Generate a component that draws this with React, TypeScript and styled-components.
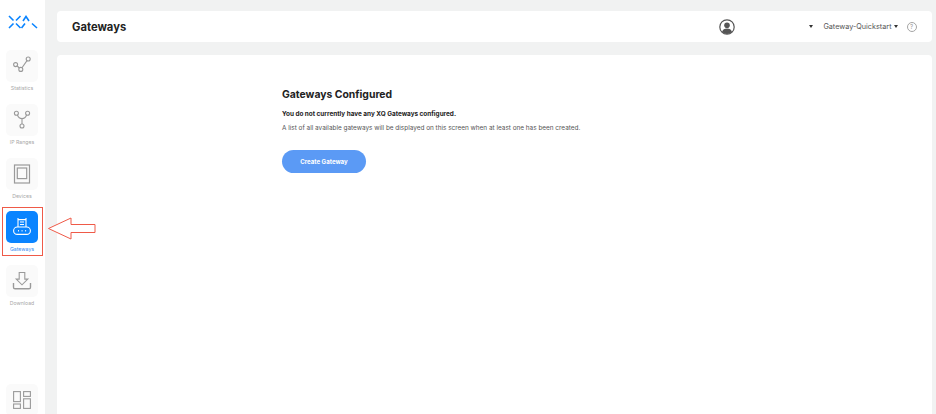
import React from "react";
import styled, { createGlobalStyle } from "styled-components";

const Global = createGlobalStyle`
  html, body { margin: 0; padding: 0; height: 100%; background: #f1f2f2; }
  body { font-family: Inter, "Liberation Sans", sans-serif; overflow: hidden; }
  #root { height: 414px; }
`;

const Page = styled.div`
  position: relative;
  width: 936px;
  height: 414px;
  display: flex;
  overflow: hidden;
  background: #f1f2f2;
`;

const Sidebar = styled.nav`
  width: 45px;
  height: 414px;
  background: #fff;
  flex: none;
  display: flex;
  flex-direction: column;
  align-items: center;
  padding-top: 15px;
  box-sizing: border-box;
`;

const Logo = styled.svg`
  width: 30px;
  height: 15px;
  margin-bottom: 20px;
  flex: none;
`;

const NavList = styled.div`
  display: flex;
  flex-direction: column;
  flex: 1;
  margin-bottom: -24px;
`;

const NavItem = styled.div<{ $bottom?: boolean }>`
  width: 45px;
  height: 53.8px;
  flex: none;
  display: flex;
  flex-direction: column;
  align-items: center;
  margin-top: ${(p) => (p.$bottom ? "auto" : "0")};
`;

const Tile = styled.div<{ $active?: boolean }>`
  width: 32px;
  height: 32px;
  border-radius: 5px;
  background: ${(p) => (p.$active ? "#0a84ff" : "#fafafa")};
  color: ${(p) => (p.$active ? "#fff" : "#9a9a9a")};
  display: flex;
  align-items: center;
  justify-content: center;
  margin-left: -1px;
`;

const NavLabel = styled.span<{ $active?: boolean }>`
  margin-top: 3px;
  margin-left: -1px;
  font-size: 5.2px;
  line-height: 7px;
  color: ${(p) => (p.$active ? "#3b8df0" : "#a8a8a8")};
`;

const Main = styled.main`
  flex: 1;
  display: flex;
  flex-direction: column;
  gap: 13px;
  padding: 11px 4px 0 12px;
  min-width: 0;
`;

const TopBar = styled.header`
  height: 31px;
  flex: none;
  background: #fff;
  border-radius: 4px;
  display: flex;
  align-items: center;
  padding: 0 15.5px 0 15px;
`;

const PageTitle = styled.h1`
  margin: 0;
  font-size: 11.2px;
  font-weight: 700;
  color: #222;
  flex: 1;
`;

const Avatar = styled.svg`
  width: 16px;
  height: 16px;
  color: #555;
  margin-right: 74px;
`;

const Caret = styled.span`
  width: 0;
  height: 0;
  border-left: 2.5px solid transparent;
  border-right: 2.5px solid transparent;
  border-top: 3px solid #333;
`;

const Workspace = styled.span`
  font-size: 7.25px;
  color: #555;
  margin: 0 2px 0 10px;
`;

const Help = styled.span`
  width: 8px;
  height: 8px;
  border-radius: 50%;
  border: 1px solid #a5a5a5;
  margin-left: 9px;
  color: #999;
  font-size: 6px;
  line-height: 8px;
  text-align: center;
`;

const Panel = styled.section`
  flex: 1;
  background: #fff;
  border-radius: 4px 4px 0 0;
  padding: 33px 0 0 225px;
  display: flex;
  flex-direction: column;
  align-items: flex-start;
`;

const Heading = styled.h2`
  margin: 0;
  font-size: 10.4px;
  line-height: 14px;
  font-weight: 700;
  color: #222;
`;

const Strong = styled.p`
  margin: 8px 0 0;
  font-size: 6.4px;
  line-height: 9px;
  font-weight: 700;
  color: #222;
`;

const Body = styled.p`
  margin: 5px 0 0;
  font-size: 6.42px;
  line-height: 9px;
  color: #555;
`;

const Button = styled.button`
  margin-top: 17px;
  width: 84px;
  height: 23px;
  border: 0;
  border-radius: 12px;
  background: #5b9af5;
  color: #fff;
  font-family: inherit;
  font-size: 6.1px;
  font-weight: 700;
  padding: 0;
`;

const Highlight = styled.div`
  position: absolute;
  left: 2px;
  top: 207px;
  width: 39px;
  height: 47px;
  border: 1.5px solid #ef5a48;
`;

const Arrow = styled.svg`
  position: absolute;
  left: 47px;
  top: 217px;
  width: 50px;
  height: 23px;
`;

const Icon = styled.svg`
  width: 20px;
  height: 20px;
  fill: none;
  stroke: currentColor;
  stroke-width: 1.1;
`;

const items = [
  {
    label: "Statistics",
    icon: (
      <>
        <circle cx="3.6" cy="8.6" r="2" />
        <circle cx="8.8" cy="13.4" r="2" />
        <circle cx="16.2" cy="3" r="2" />
        <path d="M5.2 10 7.3 12M10 11.8 15 4.6" />
      </>
    ),
  },
  {
    label: "IP Ranges",
    icon: (
      <>
        <circle cx="4.4" cy="3.2" r="2" />
        <circle cx="15.6" cy="3.2" r="2" />
        <circle cx="10" cy="16" r="2" />
        <path d="M5.4 5C6.4 7.6 8 8.6 10 8.6s3.6-1 4.6-3.6M10 8.6V14" />
      </>
    ),
  },
  {
    label: "Devices",
    icon: (
      <>
        <rect x="2.5" y="1" width="15" height="18" strokeWidth="1.2" />
        <rect x="5.3" y="4" width="9.4" height="10.6" strokeWidth="1.2" />
      </>
    ),
  },
  {
    label: "Gateways",
    active: true,
    icon: (
      <>
        <path d="M6 1v9M14 1v9M6 2.6h8M8 5h4M8 7.5h4" />
        <rect x="1.6" y="10" width="16.8" height="7.4" rx="3.7" />
        <path d="M6 13.8h.9M9.6 13.8h.9M13.2 13.8h.9" strokeWidth="1.5" />
      </>
    ),
  },
  {
    label: "Download",
    icon: (
      <>
        <path d="M7.2 1.5h5.6v6.6h3L10 13.8 4.2 8.1h3z" />
        <path d="M1.5 12v4.2a1.6 1.6 0 0 0 1.6 1.6h13.8a1.6 1.6 0 0 0 1.6-1.6V12" strokeWidth="1.4" />
      </>
    ),
  },
];

function NavTile({ label, icon, active }: { label?: string; icon: React.ReactNode; active?: boolean }) {
  return (
    <>
      <Tile $active={active}>
        <Icon viewBox="0 0 20 20">{icon}</Icon>
      </Tile>
      {label && <NavLabel $active={active}>{label}</NavLabel>}
    </>
  );
}

export default function App() {
  return (
    <Page>
      <Global />
      <Sidebar>
        <Logo viewBox="0 0 30 15" fill="none" stroke="#0a84ff" strokeWidth="1.6">
          <path d="M1 1 5.5 5.5M12.5 1 8 5.5M5.5 8.5 1 13M8 8.5 12.5 13M15 6 18 1.5 21 6M13.5 13 17 8.5M24 8.5 29 13" />
        </Logo>
        <NavList>
          {items.map((it) => (
            <NavItem key={it.label}>
              <NavTile label={it.label} icon={it.icon} active={it.active} />
            </NavItem>
          ))}
          <NavItem $bottom>
            <NavTile
              icon={
                <>
                  <rect x="1.6" y="1.6" width="6.8" height="10" />
                  <rect x="11.6" y="1.6" width="6.8" height="4.8" />
                  <rect x="1.6" y="14" width="6.8" height="4.4" />
                  <rect x="11.6" y="8.8" width="6.8" height="9.6" />
                </>
              }
            />
          </NavItem>
        </NavList>
      </Sidebar>
      <Main>
        <TopBar>
          <PageTitle>Gateways</PageTitle>
          <Avatar viewBox="0 0 16 16">
            <circle cx="8" cy="8" r="7.2" fill="none" stroke="currentColor" strokeWidth="1.2" />
            <circle cx="8" cy="6.2" r="2.8" fill="currentColor" />
            <path d="M3 13c.6-2.6 2.6-3.6 5-3.6s4.4 1 5 3.6a7 7 0 0 1-10 0z" fill="currentColor" />
          </Avatar>
          <Caret />
          <Workspace>Gateway-Quickstart</Workspace>
          <Caret />
          <Help>?</Help>
        </TopBar>
        <Panel>
          <Heading>Gateways Configured</Heading>
          <Strong>You do not currently have any XQ Gateways configured.</Strong>
          <Body>A list of all available gateways will be displayed on this screen when at least one has been created.</Body>
          <Button>Create Gateway</Button>
        </Panel>
      </Main>
      <Highlight />
      <Arrow viewBox="0 0 50 23" fill="#fff" stroke="#ef5a48" strokeWidth="1">
        <path d="M1.5 11.5 24 1v6.5h24v8H24V22z" />
      </Arrow>
    </Page>
  );
}
